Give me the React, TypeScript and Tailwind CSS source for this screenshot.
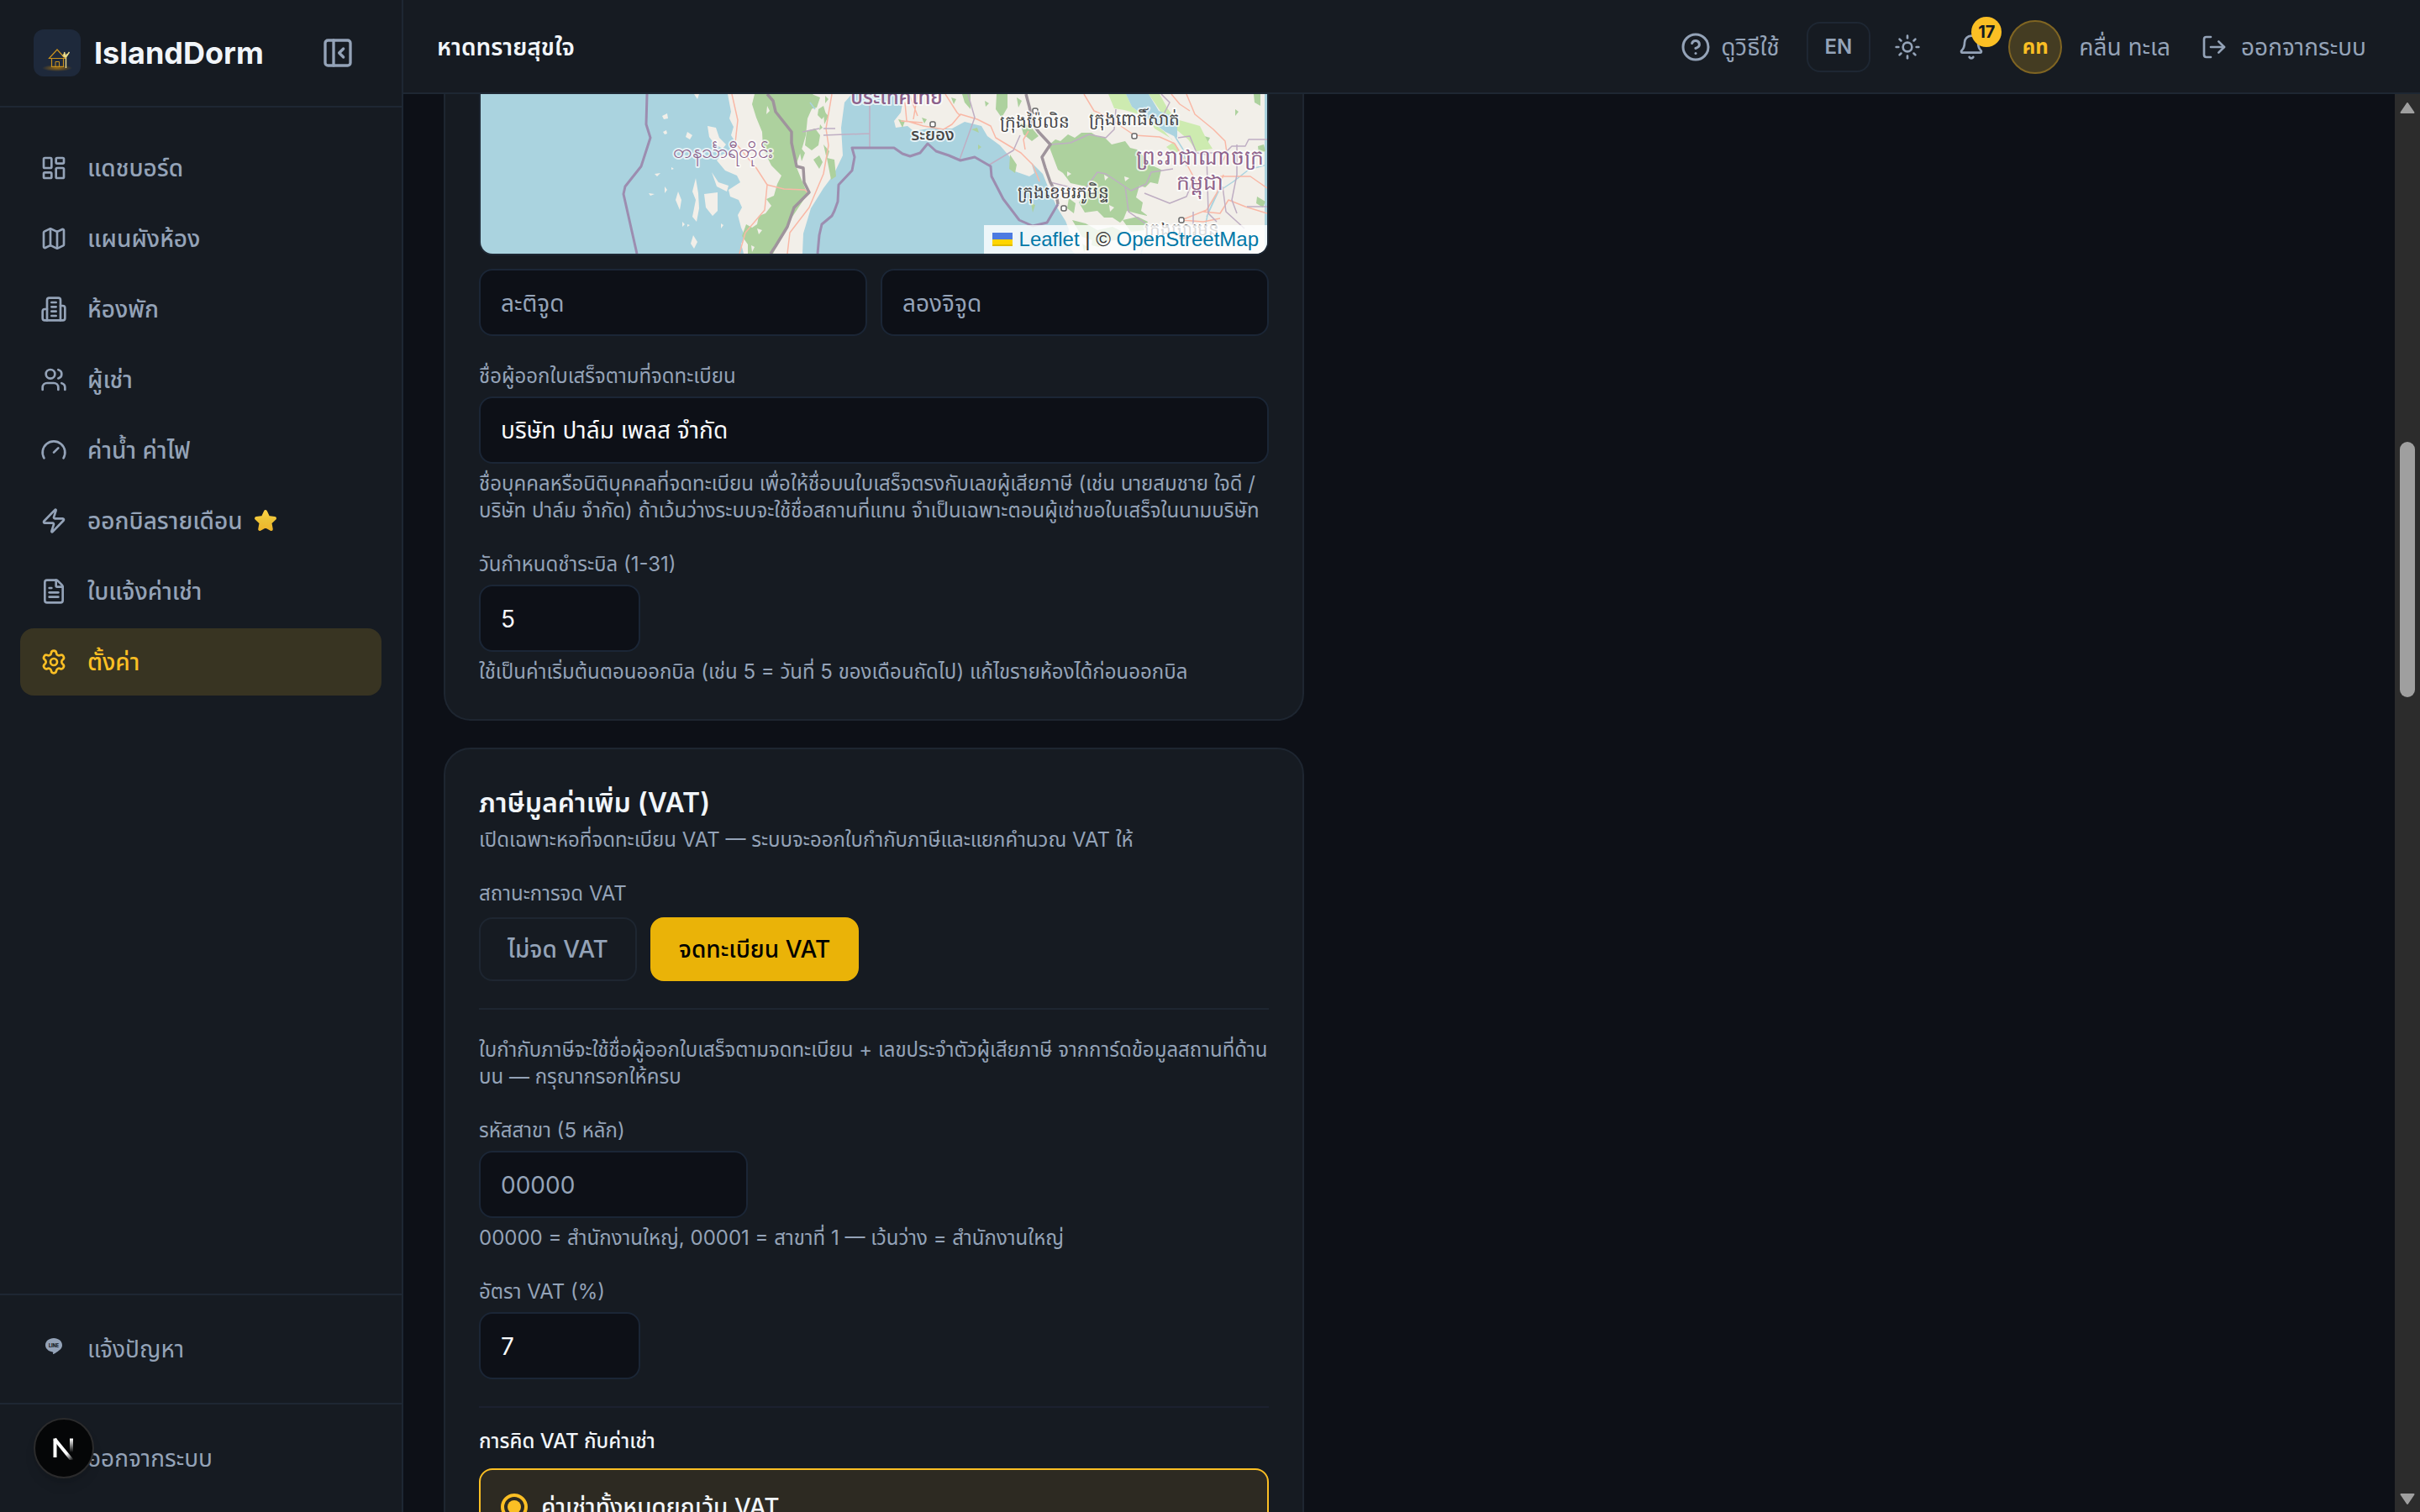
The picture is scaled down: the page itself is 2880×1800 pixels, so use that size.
import type { ReactNode } from 'react'
import {
  Bell,
  CircleHelp,
  FileText,
  Gauge,
  LayoutDashboard,
  LogOut,
  Map,
  PanelLeftClose,
  Settings,
  Sun,
  Users,
  Zap,
} from 'lucide-react'
import type { LucideIcon } from 'lucide-react'

type NavItem = {
  label: string
  icon: LucideIcon | typeof RoomsIcon
  active?: boolean
  starred?: boolean
}

const navItems: NavItem[] = [
  { label: 'แดชบอร์ด', icon: LayoutDashboard },
  { label: 'แผนผังห้อง', icon: Map },
  { label: 'ห้องพัก', icon: RoomsIcon },
  { label: 'ผู้เช่า', icon: Users },
  { label: 'ค่าน้ำ ค่าไฟ', icon: Gauge },
  { label: 'ออกบิลรายเดือน', icon: Zap, starred: true },
  { label: 'ใบแจ้งค่าเช่า', icon: FileText },
  { label: 'ตั้งค่า', icon: Settings, active: true },
]

function RoomsIcon({ className }: { className?: string }) {
  return (
    <svg
      viewBox="0 0 24 24"
      fill="none"
      stroke="currentColor"
      strokeWidth="2"
      strokeLinecap="round"
      strokeLinejoin="round"
      className={className}
    >
      <path d="M6 22V4a2 2 0 0 1 2-2h8a2 2 0 0 1 2 2v18Z" />
      <path d="M6 12H4a2 2 0 0 0-2 2v6a2 2 0 0 0 2 2h2" />
      <path d="M18 9h2a2 2 0 0 1 2 2v9a2 2 0 0 1-2 2h-2" />
      <path d="M10 6h4M10 10h4M10 14h4M10 18h4" />
    </svg>
  )
}

function StarIcon() {
  return (
    <svg viewBox="0 0 32 32" className="size-8 shrink-0" aria-hidden="true">
      <defs>
        <linearGradient id="star" x1="0" y1="0" x2="0" y2="1">
          <stop offset="0" stopColor="#fcd144" />
          <stop offset="0.5" stopColor="#ecc236" />
          <stop offset="1" stopColor="#eeb62c" />
        </linearGradient>
      </defs>
      <path
        d="M15 5l3.300 7 7.700 1-5.600 5.300 1.400 7.700L15 22.300 8.200 26l1.400-7.700L4 13l7.700-1z"
        fill="url(#star)"
        stroke="url(#star)"
        strokeWidth="4"
        strokeLinejoin="round"
      />
    </svg>
  )
}

function LineIcon() {
  return (
    <svg viewBox="0 0 32 32" className="size-8 shrink-0" aria-hidden="true">
      <path
        d="M16 3C10.500 3 6 6.600 6 11.200c0 4.100 3.600 7.500 8.500 8.200.7.200.8.600.7 1.200l-.2 1c0 .5.200.6.700.4 2.300-1.200 7-4.200 8.900-6.600 1-1.200 1.400-2.600 1.400-4.200C26 6.600 21.500 3 16 3z"
        fill="currentColor"
      />
      <text
        x="16"
        y="13.500"
        textAnchor="middle"
        fontSize="5.500"
        fontWeight="800"
        fill="#161b22"
      >
        LINE
      </text>
    </svg>
  )
}

function Logo() {
  return (
    <svg viewBox="0 0 56 56" className="size-14 rounded-xl bg-[#1e293b]" aria-hidden="true">
      <defs>
        <radialGradient id="glow">
          <stop offset="0" stopColor="#a16f10" stopOpacity="0.9" />
          <stop offset="1" stopColor="#a16f10" stopOpacity="0" />
        </radialGradient>
      </defs>
      <ellipse cx="28" cy="46" rx="18" ry="4" fill="url(#glow)" />
      <g fill="none" stroke="#c9921e" strokeWidth="1.200">
        <path d="M18.500 34.500L28 24l9.500 10.500z" />
        <path d="M21.500 35v9.500h14V35" />
        <path d="M26 44v-5.500h4.500V44" strokeWidth="1" />
      </g>
      <path
        d="M38.500 46V33m0 0l-4-2m4 2l-2-6m2 6l1.500-4m-1.500 4l4-6m-4 6l-3-4"
        fill="none"
        stroke="#eddd8a"
        strokeWidth="1.400"
      />
    </svg>
  )
}

function Sidebar() {
  return (
    <aside className="flex w-[480px] shrink-0 flex-col border-r-2 border-[#1e2733] bg-[#161b22]">
      <div className="flex h-32 items-center gap-4 border-b-2 border-[#1e2733] pr-10 pl-10">
        <Logo />
        <span className="flex-1 text-[36px] font-bold text-slate-100">IslandDorm</span>
        <button type="button" aria-label="ย่อเมนู" className="p-4 text-[#94a3b8]">
          <PanelLeftClose className="size-10" />
        </button>
      </div>

      <nav className="flex flex-1 flex-col gap-1 px-6 py-8">
        {navItems.map(({ label, icon: Icon, active, starred }) => (
          <a
            key={label}
            href="#"
            className={
              active
                ? 'flex items-center gap-6 rounded-2xl bg-[#383422] px-6 py-5 font-medium text-[#fbbf24]'
                : 'flex items-center gap-6 rounded-2xl px-6 py-5 font-medium text-[#94a3b8]'
            }
          >
            <Icon className="size-8 shrink-0" />
            <span className="flex items-center gap-3">
              {label}
              {starred && <StarIcon />}
            </span>
          </a>
        ))}
      </nav>

      <div className="border-t-2 border-[#1e2733] p-6">
        <a href="#" className="flex items-center gap-6 px-6 py-5 text-[#94a3b8]">
          <LineIcon />
          แจ้งปัญหา
        </a>
      </div>
      <div className="relative border-t-2 border-[#1e2733] p-6">
        <button type="button" className="flex items-center gap-6 px-6 py-5 text-[#94a3b8]">
          <LogOut className="size-8" />
          ออกจากระบบ
        </button>
        <DevBadge />
      </div>
    </aside>
  )
}

function DevBadge() {
  return (
    <button
      type="button"
      aria-label="Next.js"
      className="absolute top-4 left-10 flex size-18 items-center justify-center rounded-full border-2 border-[#2b2b2c] bg-[#050607] shadow-lg"
    >
      <svg viewBox="0 0 28 28" className="size-7" fill="none" aria-hidden="true">
        <defs>
          <linearGradient id="diag" x1="14" y1="14" x2="25" y2="28" gradientUnits="userSpaceOnUse">
            <stop offset="0.400" stopColor="#fff" />
            <stop offset="1" stopColor="#fff" stopOpacity="0" />
          </linearGradient>
          <linearGradient id="bar" x1="0" y1="3" x2="0" y2="19" gradientUnits="userSpaceOnUse">
            <stop offset="0" stopColor="#fff" />
            <stop offset="1" stopColor="#fff" stopOpacity="0" />
          </linearGradient>
        </defs>
        <path d="M3.500 25V2.500" stroke="#fff" strokeWidth="4" />
        <path d="M3 3l22 27" stroke="url(#diag)" strokeWidth="4" />
        <path d="M23 2.500V20" stroke="url(#bar)" strokeWidth="4" />
      </svg>
    </button>
  )
}

function Header() {
  return (
    <header className="flex shrink-0 items-center justify-between border-b-2 border-[#1e2733] bg-[#161b22] px-10 pt-6 pb-[22px]">
      <h1 className="font-semibold text-slate-100">หาดทรายสุขใจ</h1>
      <div className="flex items-center gap-3 text-[#94a3b8]">
        <a href="#" className="flex items-center gap-3 px-5">
          <CircleHelp className="size-9" />
          ดูวิธีใช้
        </a>
        <button
          type="button"
          className="rounded-2xl border-2 border-[#1e2733] px-5 py-3 text-2xl font-semibold"
        >
          EN
        </button>
        <button type="button" aria-label="สลับธีม" className="p-4">
          <Sun className="size-8" />
        </button>
        <button type="button" aria-label="การแจ้งเตือน" className="relative p-4">
          <Bell className="size-8" />
          <span className="absolute -top-1 -right-1 flex size-9 items-center justify-center rounded-full bg-[#fbbf24] text-xl font-bold text-[#161b22]">
            17
          </span>
        </button>
        <div className="flex items-center gap-5">
          <span className="flex size-16 items-center justify-center rounded-full border-2 border-[#806522] bg-[#443c22] text-2xl font-bold text-[#fbbf24]">
            คท
          </span>
          <span>คลื่น ทะเล</span>
        </div>
        <button type="button" className="flex items-center gap-4 px-6">
          <LogOut className="size-8" />
          ออกจากระบบ
        </button>
      </div>
    </header>
  )
}

function TownMarker({ x, y }: { x: number; y: number }) {
  return <rect x={x - 3} y={y - 3} width="6" height="6" rx="2" fill="#fff" stroke="#666" strokeWidth="1.500" />
}

function MapView() {
  return (
    <div className="relative h-48 overflow-hidden rounded-b-2xl border-2 border-t-0 border-[#1e2733] bg-[#aad3df]">
      <svg
        viewBox="0 0 936 190"
        preserveAspectRatio="xMinYMax slice"
        className="h-full w-full"
        fill="none"
        strokeLinejoin="round"
        aria-hidden="true"
      >
        <g fill="#f2efe9">
          <path d="M294 0l4 21-2 8 5 10-3 10 5 8-6 8 4 10-12-4-8 8 10 12 14 6 4 8-14 9 2 8 10 4 4 9-5 9 4 15 5 11-5 8 3 12h70l1-24 9-30 15-24 12-16 11-23-2-33 4-30 13-15z" />
          <path d="M504 0l-4 22-8 10 2 8 14-2 7 6 19-3 27 0 15-8 20 5 7 12 15 11 12 14 3 16 20 7 6-4-4-13 14 14 8 20 9 20 10 16 4 10-2 19 11 12h224V0z" />
          <path d="M270 38l10 2 4 12 8 8-4 5-10-6-6-8zM275 93l8 12 12 4-2 7-12-6zM266 119l16-2 0 22-6 6-8-10zM256 100l3 18 1 18-3 16-5-6 4-20-4-10zM235 116l4 10-2 12-5-12zM246 45l6 4-3 5-5-3zM253 168l5 8-4 8-4-6zM216 26l6-3 1 6-5 1zM217 45l4-2 1 4-3 1zM207 95l7-1-4 4zM227 87l3 2-3 1zM200 118l7 1-5 2zM219 110l3 4-3 4zM246 155l3 1-3 2zM254 0l6 0-2 6zM240 152l3 3-3 3zM286 154l3 2-3 4z" />
        </g>

        <g fill="#add19e">
          <path d="M326 0l-3 12 5 16 7 17 1 20 10 20 12 12-5 10-4 14-9 4 6 8-7 9-8 3-2 10-6 4-7-4-5 14 7 10v11h30l17-35 24-36-14-34 8-22 4-14 2-20 8-18-2-13z" />
          <path d="M388 44l10-3 6 8-2 12-8 6-8-6zM402 18l6-4 3 10-5 6-5-5zM396 78l7-5 4 8-4 8zM394 0l10 4-4 12-8 2zM408 60l7 8-3 10zM404 36l3 4-4 3zM378 60l8 10-4 10zM410 2l4 4-4 5z" />
          <path d="M676 61l8-7 6 2 9-8 8 4 8-6 12 0 6 4 10 2 8 8 16-4 6 8 8 2 10 10 6 8 13 6-4 17-9-2-6 6-7-2-4 14 8 6-2 10 8 6-10-2-15-4-4 10-4 4-9-6-10 0-8-8-15 2-7-12 13-18-23-5-9-12-6-4z" />
          <path d="M614 0h13v16l-7 12-7-10zM630 72l8 12-2 10-7-5zM573 0h10v18l-7-8zM642 34l12 4 10 12-8 6-10-8zM584 42l7-2 2 6zM412 76l9 2 2 20-6 4zM408 20l6 6-5 10zM920 0h8v14l-7-4zM898 18l4 3-4 5zM925 62l7-2 2 8-8 2zM924 122l10 6-3 7-8-5zM861 50l7 2-3 6zM655 130l5 2-3 9zM592 60l4 3-4 3zM525 28l6 2-3 5zM497 30l8 2-3 8zM560 4l6 2-3 6zM600 8l5 3-4 4zM638 4l6 4-4 8zM726 22l5 2-4 4z" />
          <path d="M704 150l16 4 14 8 18-4 12 6-8 10-22 2-18-6zM764 150l18-4 12 6-4 10-16 2zM700 124l8 6-2 12-8-6zM728 172l10 2-2 8-9-2zM716 178l6 4-4 6z" />
        </g>
        <g fill="#f2efe9">
          <path d="M724 112l6 2-3 6zM742 96l5 3-4 4zM766 98l6 2-5 4zM748 132l6 3-5 5zM698 92l5 3-5 3zM730 144l4 3-4 3zM341 14l3 6-4 4zM329 160l6 2-4 5zM322 180l4 2-3 6z" />
        </g>
        <path d="M747 0h21l7 15 39 30 11 12-9 6 10 8 6-4-10-14-20-12-8-14-28-8-12-2z" fill="#cdebb0" />
        <path d="M795 0h13l10 18 10 12 28 8 8 16 7 11-19 3-10-14-24-20-12-18z" fill="#cdebb0" />
        <path d="M768 0h27l12 20 22 8 0 24-14-7-40-30z" fill="#aad3df" />

        {/* rivers */}
        <g stroke="#aad3df" strokeWidth="1.500">
          <path d="M826 50l10 16 4 20M936 84l-22 6-18 14-18 12-14 30M875 120l-10 24-6 30M792 166l-6 24M392 10l6 8" />
        </g>

        {/* roads */}
        <g stroke="#f9b8a6" strokeWidth="1.500">
          <path d="M299 0l7 31-3 27 25 30 13 20-3 30-23 27-7 25" />
          <path d="M341 108l20 5 25 1 5 5" />
          <path d="M418 0l-7 41 3 20-6 34-17 40-23 30-3 25" />
          <path d="M505 10l2 22 20 6 24 4 10-6 10-12 20 6 16 8 6 14 30 18 14 14 8 20M510 0l10 26M520 0l-5 30M553 0l14 22 4 4M500 32l26 2" />
          <path d="M718 0l12 20 14 6 34 23 30 2 18 8 14 24 12 22 4 18M840 0l10 24 22 18 14 14 2 14-8 16M880 98h36l20 14M860 140l20 2 10-16 20 8 26 8M834 150l30-12 12-20 8-22M834 150l26 2 20-4" />
          <path d="M822 0l10 12 12 8M652 44l-6 10 2 12" />
        </g>

        {/* provincial borders */}
        <g stroke="#bfaec3" strokeWidth="1.500">
          <path d="M408 41l14 0M383 45l20-4M463 0v64M408 49l55-2M570 78l18-50-8-28M604 85l30-18 8-18" />
          <path d="M678 60l24-2 22-10 20 4 10-10 2-24M678 105l40 10 16-22 10 2 30 20 18-8 6-14 26-4M767 110l4 30 20 14M810 0l10 10-10 20M830 52l14-2 8 20 12 2 2 70 10 10M866 70h20l8-8h16l4-8h22M900 60v36l-6 30 6 16" />
          <path d="M790 118l30 12 20-8 8-20M848 140v34h16v-20M912 134h24M883 110l4 30 22 20" />
        </g>

        {/* international borders */}
        <g stroke="#9c8db0" strokeWidth="3">
          <path d="M198 0l-1 36 5 16-11 34-19 24-2 9 16 71" />
          <path d="M401 190l2-22 3-13 12-10 3-6 4-11 1-20 16-17 3-16-3-11h50l10 7 9 3 12-4 9-11 10 9 15 5 14 6 17-4 19 11 1 12 14 27 19 25 16 7 17-4 13-22" />
        </g>
        <g stroke="#9f949c" strokeWidth="3.500">
          <path d="M341 0l7 8 3 13 19 24v13l6 28 8 2 1 17 6 12-18 18-8 23-14 23-6 9" />
          <path d="M649 0l4 15 4 20 7 10 14 15-10 15 4 13 6 17 7 13 2 13" />
        </g>

        <TownMarker x={660} y={20} />
        <TownMarker x={538} y={36} />
        <TownMarker x={778} y={50} />
        <TownMarker x={694} y={136} />
        <TownMarker x={834} y={150} />

        <g
          textAnchor="middle"
          stroke="#fff"
          strokeOpacity="0.700"
          strokeWidth="4"
          paintOrder="stroke"
          fontSize="20"
          fontWeight="500"
          fill="#444"
        >
          <g fill="#8d618b">
            <text x="288" y="76" fontSize="23">တနင်္သာရီတိုင်း</text>
            <text x="495" y="12" fontSize="24">ประเทศไทย</text>
            <text x="856" y="84" fontSize="25">ព្រះរាជាណាចក្រ</text>
            <text x="856" y="114" fontSize="25">កម្ពុជា</text>
          </g>
          <text x="538" y="55">ระยอง</text>
          <text x="659" y="40">ក្រុងប៉ៃលិន</text>
          <text x="778" y="37">ក្រុងពោធិ៍សាត់</text>
          <text x="693" y="124">ក្រុងខេមរភូមិន្ទ</text>
          <text x="834" y="168">ក្រុងច្បារមន</text>
        </g>
      </svg>

      <div className="absolute right-0 bottom-0 bg-white/80 px-[10px] font-['Liberation_Sans',sans-serif] text-2xl leading-[34px] text-[#333]">
        <a href="#" className="text-[#0078a8]">
          <svg viewBox="0 0 24 16" className="mr-2 inline h-4 w-6 align-baseline" aria-hidden="true">
            <path fill="#4c7be1" d="M0 0h24v8H0z" />
            <path fill="#ffd500" d="M0 8h24v6H0z" />
            <path fill="#e0bc00" d="M0 14h24v2H0z" />
          </svg>
          Leaflet
        </a>{' '}
        | © <a href="#" className="text-[#0078a8]">OpenStreetMap</a>
      </div>
    </div>
  )
}

const inputClass =
  'h-20 rounded-2xl border-2 border-[#1b2636] bg-[#0d1017] px-6 pt-0.5 text-slate-50 placeholder:text-[#94a3b8]'

function Field({
  id,
  label,
  hint,
  children,
}: {
  id: string
  label: string
  hint?: ReactNode
  children: ReactNode
}) {
  return (
    <div className="flex flex-col items-start gap-2 text-2xl text-[#94a3b8]">
      <label htmlFor={id}>{label}</label>
      {children}
      {hint && <p>{hint}</p>}
    </div>
  )
}

function PlaceCard() {
  return (
    <section className="space-y-8 rounded-b-4xl border-2 border-t-0 border-[#1e2631] bg-[#161b22] px-10 pb-10">
      <div className="flex flex-col gap-4">
        <MapView />
        <div className="grid grid-cols-2 gap-4">
          <input aria-label="ละติจูด" placeholder="ละติจูด" className={inputClass} />
          <input aria-label="ลองจิจูด" placeholder="ลองจิจูด" className={inputClass} />
        </div>
      </div>
      <Field
        id="issuer"
        label="ชื่อผู้ออกใบเสร็จตามที่จดทะเบียน"
        hint={
          <>
            ชื่อบุคคลหรือนิติบุคคลที่จดทะเบียน เพื่อให้ชื่อบนใบเสร็จตรงกับเลขผู้เสียภาษี (เช่น นายสมชาย ใจดี /
            <br />
            บริษัท ปาล์ม จำกัด) ถ้าเว้นว่างระบบจะใช้ชื่อสถานที่แทน จำเป็นเฉพาะตอนผู้เช่าขอใบเสร็จในนามบริษัท
          </>
        }
      >
        <input
          id="issuer"
          defaultValue="บริษัท ปาล์ม เพลส จำกัด"
          className={`${inputClass} w-full text-[28px]`}
        />
      </Field>
      <Field
        id="due-day"
        label="วันกำหนดชำระบิล (1-31)"
        hint="ใช้เป็นค่าเริ่มต้นตอนออกบิล (เช่น 5 = วันที่ 5 ของเดือนถัดไป) แก้ไขรายห้องได้ก่อนออกบิล"
      >
        <input id="due-day" defaultValue="5" className={`${inputClass} w-48 text-[28px]`} />
      </Field>
    </section>
  )
}

function VatCard() {
  return (
    <section className="rounded-4xl border-2 border-[#1e2631] bg-[#161b22] p-10 text-2xl text-[#94a3b8]">
      <h2 className="text-[32px] leading-12 font-semibold text-slate-100">ภาษีมูลค่าเพิ่ม (VAT)</h2>
      <p className="mt-1">เปิดเฉพาะหอที่จดทะเบียน VAT — ระบบจะออกใบกำกับภาษีและแยกคำนวณ VAT ให้</p>

      <p className="mt-8 mb-3">สถานะการจด VAT</p>
      <div className="flex gap-4 text-[28px] leading-10 font-medium">
        <button type="button" className="rounded-2xl border-2 border-[#1e2631] px-8 py-4">
          ไม่จด VAT
        </button>
        <button
          type="button"
          className="rounded-2xl border-2 border-[#eab308] bg-[#eab308] px-8 py-4 text-black"
        >
          จดทะเบียน VAT
        </button>
      </div>

      <div className="mt-8 space-y-8 border-t-2 border-[#1e2631] pt-8">
        <p>
          ใบกำกับภาษีจะใช้ชื่อผู้ออกใบเสร็จตามจดทะเบียน + เลขประจำตัวผู้เสียภาษี จากการ์ดข้อมูลสถานที่ด้าน
          <br />
          บน — กรุณากรอกให้ครบ
        </p>
        <Field
          id="branch"
          label="รหัสสาขา (5 หลัก)"
          hint="00000 = สำนักงานใหญ่, 00001 = สาขาที่ 1 — เว้นว่าง = สำนักงานใหญ่"
        >
          <input id="branch" placeholder="00000" className={`${inputClass} w-80 text-[28px]`} />
        </Field>
        <Field id="vat-rate" label="อัตรา VAT (%)">
          <input id="vat-rate" defaultValue="7" className={`${inputClass} w-48 text-[28px]`} />
        </Field>

        <fieldset className="border-t-2 border-[#1c2130] pt-6">
          <p className="mb-4 font-medium text-slate-100">การคิด VAT กับค่าเช่า</p>
          <label className="flex items-start gap-4 rounded-2xl border-2 border-[#fbbf24] bg-[#2d2a22] p-6 text-[28px] leading-10 font-medium text-slate-100">
            <input
              type="radio"
              name="vat-mode"
              defaultChecked
              className="mt-1 size-8 appearance-none rounded-full border-4 border-[#fbbf24] bg-[#fbbf24] bg-clip-content p-1"
            />
            ค่าเช่าทั้งหมดยกเว้น VAT
          </label>
        </fieldset>
      </div>
    </section>
  )
}

function Scrollbar() {
  return (
    <div className="flex w-[30px] shrink-0 flex-col items-center bg-[#2c2c2c] py-2" aria-hidden="true">
      <svg viewBox="0 0 20 16" className="h-4 w-5" fill="#9f9f9f">
        <path d="M10 3l7.500 11h-15z" stroke="#9f9f9f" strokeWidth="2" strokeLinejoin="round" />
      </svg>
      <div className="flex w-[18px] flex-1 flex-col">
        <div className="flex-390" />
        <div className="flex-304 rounded-full bg-[#9f9f9f]" />
        <div className="flex-946" />
      </div>
      <svg viewBox="0 0 20 16" className="h-4 w-5" fill="#9f9f9f">
        <path d="M10 14l7.500-11h-15z" stroke="#9f9f9f" strokeWidth="2" strokeLinejoin="round" />
      </svg>
    </div>
  )
}

export default function App() {
  return (
    <div className="flex h-screen overflow-hidden bg-[#0d1017] font-['Inter','Noto_Sans_Thai','Noto_Sans',sans-serif] text-[28px] leading-10">
      <Sidebar />
      <div className="flex min-w-0 flex-1 flex-col">
        <Header />
        <div className="flex min-h-0 flex-1">
          <main className="min-w-0 flex-1 overflow-hidden px-12">
            <div className="max-w-5xl space-y-8">
              <PlaceCard />
              <VatCard />
            </div>
          </main>
          <Scrollbar />
        </div>
      </div>
    </div>
  )
}
